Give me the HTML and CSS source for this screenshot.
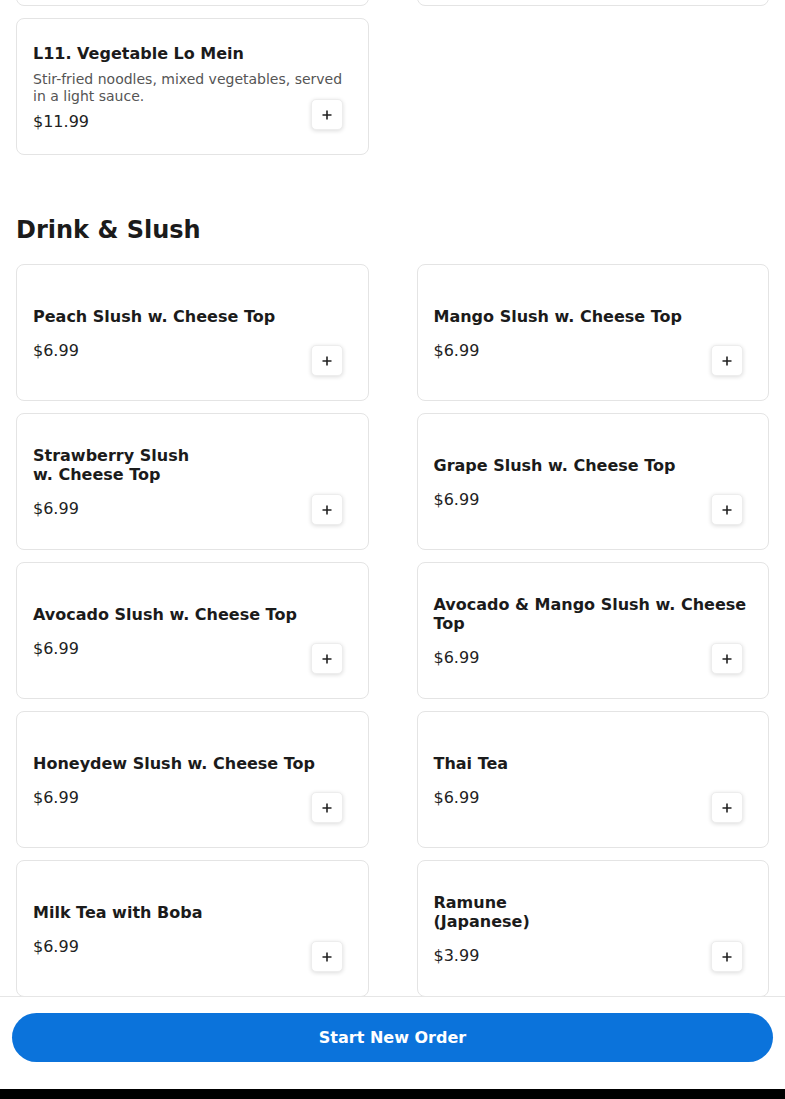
FILE: index.html
```html
<!DOCTYPE html>
<html lang="en">
<head>
  <meta charset="UTF-8">
  <title>Menu</title>
  <link rel="stylesheet" href="styles.css">
</head>
<body>

  <main class="menu">

    <section class="category category-first">
      <div class="items">
        <!-- previous row, scrolled out of view -->
        <div class="item"></div>
        <div class="item"></div>
        <div class="item">
          <div class="info">
            <div class="name">L11. Vegetable Lo Mein</div>
            <div class="desc">Stir-fried noodles, mixed vegetables, served in a light sauce.</div>
            <div class="price">$11.99</div>
          </div>
          <button class="add" aria-label="Add"><svg width="12" height="12" viewBox="0 0 12 12"><path d="M6 1.5v9M1.5 6h9" stroke="#222" stroke-width="1.6" fill="none"/></svg></button>
        </div>
      </div>
    </section>

    <section class="category">
      <h2>Drink &amp; Slush</h2>
      <div class="items">
        <div class="item">
          <div class="info">
            <div class="name">Peach Slush w. Cheese Top</div>
            <div class="price">$6.99</div>
          </div>
          <button class="add" aria-label="Add"><svg width="12" height="12" viewBox="0 0 12 12"><path d="M6 1.5v9M1.5 6h9" stroke="#222" stroke-width="1.6" fill="none"/></svg></button>
        </div>
        <div class="item">
          <div class="info">
            <div class="name">Mango Slush w. Cheese Top</div>
            <div class="price">$6.99</div>
          </div>
          <button class="add" aria-label="Add"><svg width="12" height="12" viewBox="0 0 12 12"><path d="M6 1.5v9M1.5 6h9" stroke="#222" stroke-width="1.6" fill="none"/></svg></button>
        </div>
        <div class="item">
          <div class="info">
            <div class="name">Strawberry Slush<br>w. Cheese Top</div>
            <div class="price">$6.99</div>
          </div>
          <button class="add" aria-label="Add"><svg width="12" height="12" viewBox="0 0 12 12"><path d="M6 1.5v9M1.5 6h9" stroke="#222" stroke-width="1.6" fill="none"/></svg></button>
        </div>
        <div class="item">
          <div class="info">
            <div class="name">Grape Slush w. Cheese Top</div>
            <div class="price">$6.99</div>
          </div>
          <button class="add" aria-label="Add"><svg width="12" height="12" viewBox="0 0 12 12"><path d="M6 1.5v9M1.5 6h9" stroke="#222" stroke-width="1.6" fill="none"/></svg></button>
        </div>
        <div class="item">
          <div class="info">
            <div class="name">Avocado Slush w. Cheese Top</div>
            <div class="price">$6.99</div>
          </div>
          <button class="add" aria-label="Add"><svg width="12" height="12" viewBox="0 0 12 12"><path d="M6 1.5v9M1.5 6h9" stroke="#222" stroke-width="1.6" fill="none"/></svg></button>
        </div>
        <div class="item">
          <div class="info">
            <div class="name">Avocado &amp; Mango Slush w. Cheese Top</div>
            <div class="price">$6.99</div>
          </div>
          <button class="add" aria-label="Add"><svg width="12" height="12" viewBox="0 0 12 12"><path d="M6 1.5v9M1.5 6h9" stroke="#222" stroke-width="1.6" fill="none"/></svg></button>
        </div>
        <div class="item">
          <div class="info">
            <div class="name">Honeydew Slush w. Cheese Top</div>
            <div class="price">$6.99</div>
          </div>
          <button class="add" aria-label="Add"><svg width="12" height="12" viewBox="0 0 12 12"><path d="M6 1.5v9M1.5 6h9" stroke="#222" stroke-width="1.6" fill="none"/></svg></button>
        </div>
        <div class="item">
          <div class="info">
            <div class="name">Thai Tea</div>
            <div class="price">$6.99</div>
          </div>
          <button class="add" aria-label="Add"><svg width="12" height="12" viewBox="0 0 12 12"><path d="M6 1.5v9M1.5 6h9" stroke="#222" stroke-width="1.6" fill="none"/></svg></button>
        </div>
        <div class="item">
          <div class="info">
            <div class="name">Milk Tea with Boba</div>
            <div class="price">$6.99</div>
          </div>
          <button class="add" aria-label="Add"><svg width="12" height="12" viewBox="0 0 12 12"><path d="M6 1.5v9M1.5 6h9" stroke="#222" stroke-width="1.6" fill="none"/></svg></button>
        </div>
        <div class="item">
          <div class="info">
            <div class="name">Ramune<br>(Japanese)</div>
            <div class="price">$3.99</div>
          </div>
          <button class="add" aria-label="Add"><svg width="12" height="12" viewBox="0 0 12 12"><path d="M6 1.5v9M1.5 6h9" stroke="#222" stroke-width="1.6" fill="none"/></svg></button>
        </div>
      </div>
    </section>

  </main>

  <footer class="order-bar">
    <div class="order-inner">
      <button class="start-order">Start New Order</button>
    </div>
    <div class="home-strip"></div>
  </footer>

</body>
</html>
```

FILE: styles.css
```css
* { box-sizing: border-box; }
body { margin: 0; font-family: "DejaVu Sans", Verdana, sans-serif; color: #1b1b1b; background: #fff; }

.menu { padding: 0 16px 120px; }
/* page is scrolled: the previous row sits above the viewport */
.category-first { margin-top: -131px; }
.category h2 { font-size: 24px; line-height: 28px; margin: 61px 0 20px; color: #1b1b1b; }

.items { display: grid; grid-template-columns: 1fr 1fr; gap: 12px 48px; }

.item { display: grid; min-height: 137px; padding: 16px; border: 1px solid #e4e4e4; border-radius: 8px; background: #fff; }
.info, .add { grid-area: 1 / 1; }
.info { align-self: center; display: flex; flex-direction: column; padding-top: 1px; }
.name { font-size: 16px; line-height: 19px; font-weight: bold; margin-bottom: 8px; }
.desc { font-size: 14px; line-height: 17px; color: #555; }
.price { font-size: 16px; line-height: 19px; margin-top: 7px; color: #222; }

.add { justify-self: end; align-self: end; width: 32px; height: 31px; margin: 0 9px 8px 0; padding: 0; display: flex; align-items: center; justify-content: center; background: #fff; border: 1px solid #ededed; border-radius: 5px; box-shadow: 0 1px 4px rgba(0, 0, 0, 0.14); cursor: pointer; }

.order-bar { position: fixed; left: 0; right: 0; bottom: 0; background: #fff; border-top: 1px solid #e6e6e6; }
.order-inner { padding: 16px 12px 27px; }
.start-order { display: block; width: 100%; height: 49px; border: 0; border-radius: 25px; background: #0b73db; color: #fff; font-family: inherit; font-size: 16px; font-weight: bold; cursor: pointer; }
.home-strip { height: 10px; background: #000; }
```
